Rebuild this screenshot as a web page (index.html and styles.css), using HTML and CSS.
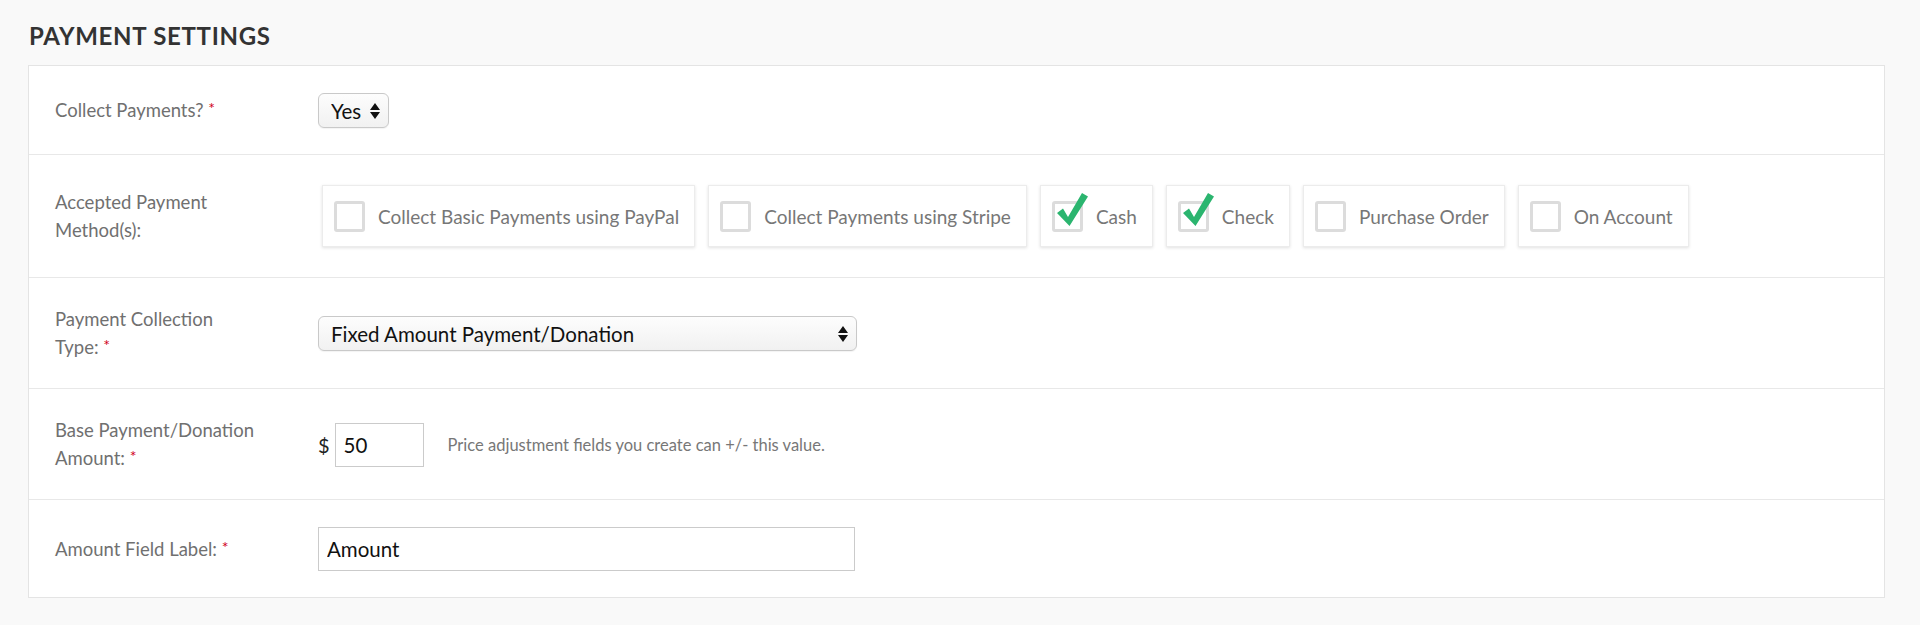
FILE: index.html
```html
<!DOCTYPE html>
<html lang="en">

<head>
    <meta charset="UTF-8">
    <title>Payment Settings</title>
    <link rel="stylesheet" href="styles.css">
</head>

<body>
    <div class="settings">
        <h2 class="section-title">Payment Settings</h2>
        <div class="panel">
            <div class="row">
                <div class="row-label">Collect Payments? <span class="req">*</span></div>
                <div class="row-field">
                    <div class="select-wrap select-small">
                        <select>
                            <option>Yes</option>
                            <option>No</option>
                        </select>
                        <svg class="select-arrows" width="10" height="16" viewBox="0 0 10 16"><path d="M5 0 L10 7 H0 Z M0 9 H10 L5 16 Z" fill="#111"/></svg>
                    </div>
                </div>
            </div>

            <div class="row row-methods">
                <div class="row-label">Accepted Payment<br>Method(s):</div>
                <div class="row-field methods">
                    <label class="method"><span class="box"></span>Collect Basic Payments using PayPal</label>
                    <label class="method"><span class="box"></span>Collect Payments using Stripe</label>
                    <label class="method checked"><span class="box"><svg class="tick" width="34" height="40" viewBox="0 0 34 40"><path d="M3 22 L9 17.5 L14 26 L28 2 L34 5.5 L15.5 35 Z" fill="#2bb56f"/></svg></span>Cash</label>
                    <label class="method checked"><span class="box"><svg class="tick" width="34" height="40" viewBox="0 0 34 40"><path d="M3 22 L9 17.5 L14 26 L28 2 L34 5.5 L15.5 35 Z" fill="#2bb56f"/></svg></span>Check</label>
                    <label class="method"><span class="box"></span>Purchase Order</label>
                    <label class="method"><span class="box"></span>On Account</label>
                </div>
            </div>

            <div class="row">
                <div class="row-label">Payment Collection<br>Type: <span class="req">*</span></div>
                <div class="row-field">
                    <div class="select-wrap select-wide">
                        <select>
                            <option>Fixed Amount Payment/Donation</option>
                            <option>Variable Amount</option>
                        </select>
                        <svg class="select-arrows" width="10" height="16" viewBox="0 0 10 16"><path d="M5 0 L10 7 H0 Z M0 9 H10 L5 16 Z" fill="#111"/></svg>
                    </div>
                </div>
            </div>

            <div class="row">
                <div class="row-label">Base Payment/Donation<br>Amount: <span class="req">*</span></div>
                <div class="row-field">
                    <span class="currency">$</span>
                    <input type="text" class="input-amount" value="50">
                    <span class="help">Price adjustment fields you create can +/- this value.</span>
                </div>
            </div>

            <div class="row row-last">
                <div class="row-label">Amount Field Label: <span class="req">*</span></div>
                <div class="row-field">
                    <input type="text" class="input-text" value="Amount">
                </div>
            </div>
        </div>
    </div>
</body>

</html>
```

FILE: styles.css
```css
body {
    margin: 0;
    background-color: #f9f9f9;
    font-family: Lato, "Liberation Sans", sans-serif;
}

.settings {
    padding: 20px 35px 0 28px;
}

.section-title {
    margin: 0 0 14px 1px;
    font-size: 24px;
    font-weight: 700;
    letter-spacing: 0.7px;
    text-transform: uppercase;
    color: #333;
    line-height: 31px;
}

.panel {
    background: white;
    border: 1px solid #e4e4e4;
}

.row {
    display: flex;
    align-items: center;
    padding: 27px 0 26px;
    border-bottom: 1px solid #e8e8e8;
}

.row-last {
    border-bottom: none;
}

.row-methods {
    padding: 27px 0 27px;
}

.row-label {
    flex: 0 0 289px;
    box-sizing: border-box;
    padding-left: 26px;
    font-size: 18.5px;
    line-height: 28px;
    color: #707070;
}

.req {
    position: relative;
    top: -3px;
    color: #d0021b;
    font-size: 16px;
}

.row-field {
    display: flex;
    align-items: center;
}

/* selects */
.select-wrap {
    position: relative;
}

.select-wrap select {
    appearance: none;
    -webkit-appearance: none;
    height: 35px;
    padding: 0 0 0 12px;
    border: 1px solid #c9c9c9;
    border-radius: 6px;
    background: linear-gradient(#fdfdfd, #f1f1f1);
    font-family: inherit;
    font-size: 20.5px;
    color: #111;
    box-shadow: 0 1px 1px rgba(0, 0, 0, 0.05);
}

.select-small select {
    width: 71px;
}

.select-wide select {
    width: 539px;
}

.select-arrows {
    position: absolute;
    right: 9px;
    top: 10px;
    pointer-events: none;
}

/* payment methods */
.methods {
    flex-wrap: wrap;
}

.method {
    display: flex;
    align-items: center;
    height: 62px;
    box-sizing: border-box;
    margin: 3px 9px 3px 4px;
    padding: 0 15px 0 11px;
    background: white;
    border: 1px solid #ececec;
    box-shadow: 0 1px 3px rgba(0, 0, 0, 0.12);
    font-size: 19px;
    color: #777;
}

.box {
    position: relative;
    width: 31px;
    height: 31px;
    box-sizing: border-box;
    margin-right: 13px;
    border: 3px solid #dcdcdc;
    border-radius: 3px;
}

.tick {
    position: absolute;
    left: -1px;
    top: -13px;
}

/* inputs */
.currency {
    font-size: 20px;
    color: #222;
    margin-right: 5px;
}

.input-amount,
.input-text {
    height: 44px;
    box-sizing: border-box;
    border: 1px solid #cbcbcb;
    padding: 0 8px;
    font-family: inherit;
    font-size: 20.5px;
    color: #111;
}

.input-amount {
    width: 89px;
}

.input-text {
    width: 537px;
}

.help {
    margin-left: 24px;
    font-size: 16.5px;
    color: #777;
}
```
